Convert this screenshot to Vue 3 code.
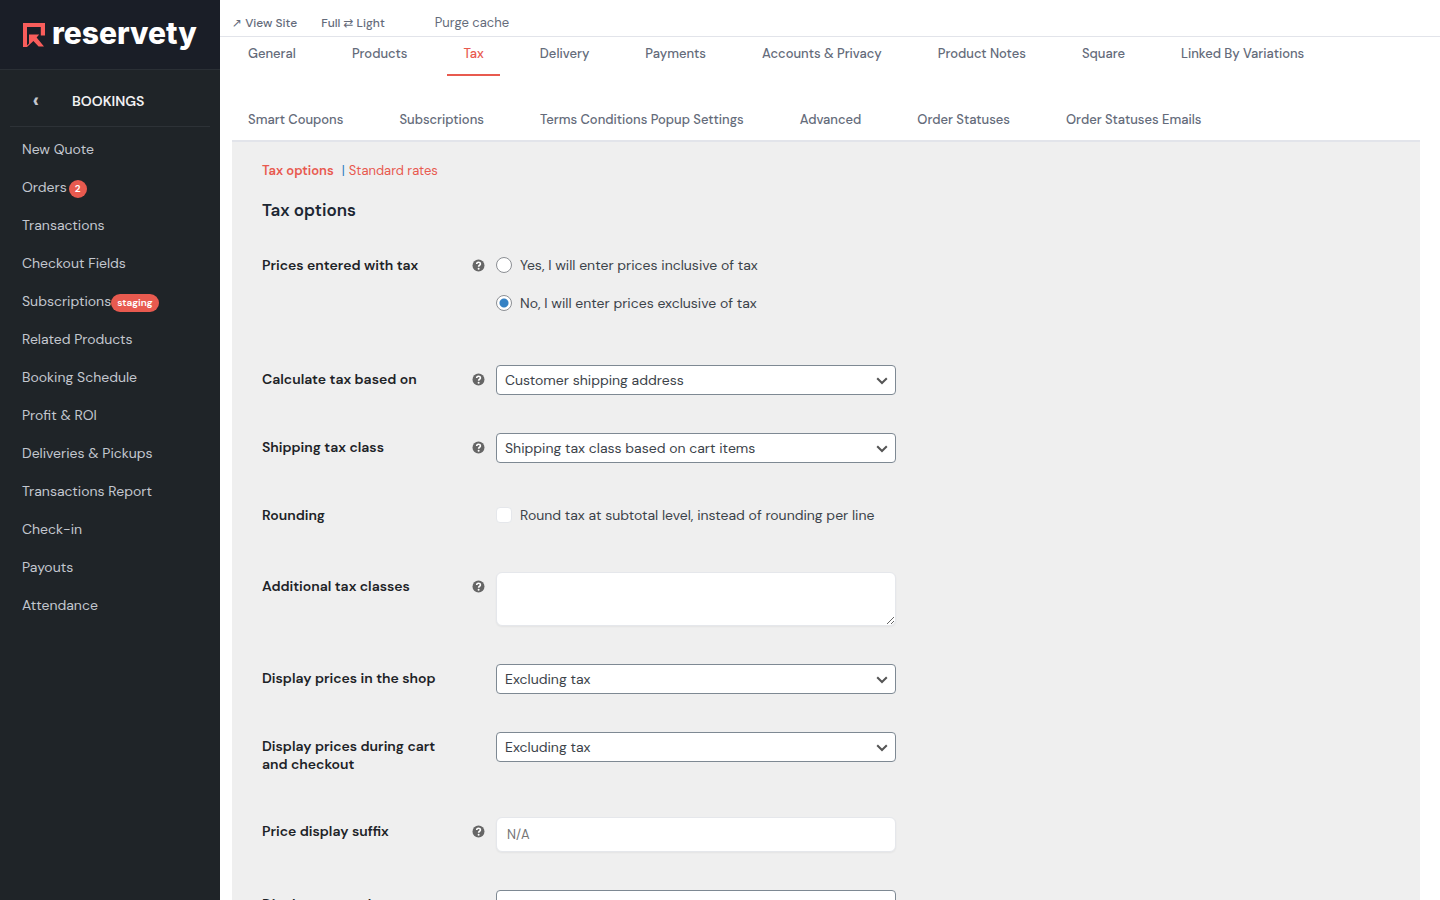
<template>
  <div class="admin">
    <aside class="sidebar">
      <a href="#" class="brand">
        <svg class="brand-mark" viewBox="0 0 22 24" aria-hidden="true">
          <path d="M0 0H22V12.5H17.8V4H4V24H0Z" />
          <path d="M6 11.5H16.2L13.6 14.6L21 23.6H15.6L10.4 18L4 24V22.5L6 20.5Z" />
        </svg>
        <span class="brand-name">reservety</span>
      </a>

      <div class="section-head">
        <button type="button" class="back" aria-label="Back">‹</button>
        <strong>BOOKINGS</strong>
      </div>

      <ul class="menu">
        <li v-for="item in menu" :key="item.label">
          <a href="#">
            <span>{{ item.label }}</span>
            <span v-if="item.badge" class="badge" :class="{ round: item.count }">{{ item.badge }}</span>
          </a>
        </li>
      </ul>
    </aside>

    <main class="content">
      <div class="topbar">
        <a href="#" class="small"><span class="arrow">↗</span> View Site</a>
        <a href="#" class="small">Full ⇄ Light</a>
        <a href="#" class="purge">Purge cache</a>
      </div>

      <nav class="tabs">
        <a v-for="tab in tabs" :key="tab" href="#" :class="{ active: tab === activeTab }">{{ tab }}</a>
      </nav>

      <section class="panel">
        <div class="subnav">
          <a href="#" class="current">Tax options</a>
          <span class="divider">|</span>
          <a href="#">Standard rates</a>
        </div>

        <h2>Tax options</h2>

        <form @submit.prevent>
          <div v-for="row in rows" :key="row.id" class="row">
            <div class="row-head">
              <component :is="labelTag(row)" :id="row.id + '-label'" class="row-label" :for="labelTag(row) === 'label' ? row.id : null">
                {{ row.label }}
              </component>
              <svg v-if="row.help" class="help" viewBox="0 0 13 13" aria-hidden="true">
                <circle cx="6.5" cy="6.5" r="6" fill="#666" />
                <path d="M4.7 5.1C4.7 2.7 8.4 2.8 8.4 4.9C8.4 6.3 6.6 6.2 6.6 7.7" fill="none" stroke="#fff" stroke-width="1.6" />
                <circle cx="6.6" cy="9.7" r="1" fill="#fff" />
              </svg>
            </div>

            <div class="field">
              <ul v-if="row.type === 'radio'" class="radios" role="radiogroup" :aria-labelledby="row.id + '-label'">
                <li v-for="opt in row.options" :key="opt.value">
                  <label class="choice">
                    <input v-model="row.value" type="radio" :name="row.id" :value="opt.value" />
                    <span>{{ opt.text }}</span>
                  </label>
                </li>
              </ul>

              <div v-else-if="row.type === 'checkbox'" class="check-wrap">
                <label class="choice">
                  <input v-model="row.value" type="checkbox" />
                  <span>{{ row.text }}</span>
                </label>
              </div>

              <textarea v-else-if="row.type === 'textarea'" :id="row.id" v-model="row.value"></textarea>

              <input v-else-if="row.type === 'text'" :id="row.id" v-model="row.value" type="text" :placeholder="row.placeholder" />

              <div v-else class="select-wrap">
                <select :id="row.id" v-model="row.value">
                  <option v-for="opt in row.options" :key="opt">{{ opt }}</option>
                </select>
                <svg class="chevron" viewBox="0 0 12 8" aria-hidden="true">
                  <path d="M1.2 1.2L6 6L10.8 1.2" fill="none" stroke="#555" stroke-width="2" />
                </svg>
              </div>
            </div>
          </div>
        </form>
      </section>
    </main>
  </div>
</template>

<script setup>
import { ref } from 'vue'

const menu = [
  { label: 'New Quote' },
  { label: 'Orders', badge: '2', count: true },
  { label: 'Transactions' },
  { label: 'Checkout Fields' },
  { label: 'Subscriptions', badge: 'staging' },
  { label: 'Related Products' },
  { label: 'Booking Schedule' },
  { label: 'Profit & ROI' },
  { label: 'Deliveries & Pickups' },
  { label: 'Transactions Report' },
  { label: 'Check-in' },
  { label: 'Payouts' },
  { label: 'Attendance' },
]

const tabs = [
  'General',
  'Products',
  'Tax',
  'Delivery',
  'Payments',
  'Accounts & Privacy',
  'Product Notes',
  'Square',
  'Linked By Variations',
  'Smart Coupons',
  'Subscriptions',
  'Terms Conditions Popup Settings',
  'Advanced',
  'Order Statuses',
  'Order Statuses Emails',
]
const activeTab = 'Tax'

const rows = ref([
  {
    id: 'prices-include-tax',
    label: 'Prices entered with tax',
    type: 'radio',
    help: true,
    value: 'no',
    options: [
      { value: 'yes', text: 'Yes, I will enter prices inclusive of tax' },
      { value: 'no', text: 'No, I will enter prices exclusive of tax' },
    ],
  },
  {
    id: 'tax-based-on',
    label: 'Calculate tax based on',
    type: 'select',
    help: true,
    value: 'Customer shipping address',
    options: ['Customer shipping address'],
  },
  {
    id: 'shipping-tax-class',
    label: 'Shipping tax class',
    type: 'select',
    help: true,
    value: 'Shipping tax class based on cart items',
    options: ['Shipping tax class based on cart items'],
  },
  {
    id: 'rounding',
    label: 'Rounding',
    type: 'checkbox',
    value: false,
    text: 'Round tax at subtotal level, instead of rounding per line',
  },
  { id: 'tax-classes', label: 'Additional tax classes', type: 'textarea', help: true, value: '' },
  {
    id: 'display-shop',
    label: 'Display prices in the shop',
    type: 'select',
    value: 'Excluding tax',
    options: ['Excluding tax'],
  },
  {
    id: 'display-cart',
    label: 'Display prices during cart and checkout',
    type: 'select',
    value: 'Excluding tax',
    options: ['Excluding tax'],
  },
  { id: 'suffix', label: 'Price display suffix', type: 'text', help: true, value: '', placeholder: 'N/A' },
  {
    id: 'tax-totals',
    label: 'Display tax totals',
    type: 'select',
    value: 'Itemized',
    options: ['Itemized'],
  },
])

// radio and checkbox rows have their labels next to the inputs
function labelTag(row) {
  return row.type === 'radio' || row.type === 'checkbox' ? 'span' : 'label'
}
</script>

<style>
body {
  margin: 0;
  background: #fff;
}
</style>

<style scoped>
.admin {
  display: flex;
  height: 100vh;
  overflow: hidden;
  font-family: "DM Sans", "DejaVu Sans", sans-serif;
  font-size: 13px;
  line-height: 18px;
  color: #3c434a;
}

a {
  color: inherit;
  text-decoration: none;
}

ul {
  list-style: none;
  margin: 0;
  padding: 0;
}

/* sidebar */
.sidebar {
  flex: 0 0 220px;
  background: #1f2428;
  color: #c3c7cf;
  font-size: 14px;
}

.brand {
  display: flex;
  align-items: center;
  gap: 7px;
  height: 69px;
  padding-left: 23px;
  background: #1a1e27;
  border-bottom: 1px solid #2a2f35;
}

.brand-mark {
  width: 22px;
  height: 24px;
  fill: #f95d5b;
}

.brand-name {
  padding-bottom: 4px;
  color: #fff;
  font-family: Inter, sans-serif;
  font-size: 30px;
  font-weight: 800;
  line-height: 36px;
}

.section-head {
  display: flex;
  align-items: center;
  height: 50px;
  margin: 0 10px;
  padding-top: 6px;
  border-bottom: 1px solid #2d3237;
}

.section-head strong {
  color: #f0f0f1;
  font-weight: 600;
}

.back {
  width: 52px;
  margin-right: 10px;
  padding: 0;
  border: 0;
  background: none;
  color: #c3c7cf;
  font-family: inherit;
  font-size: 22px;
  font-weight: 700;
  line-height: 18px;
}

.menu {
  padding-top: 3px;
}

.menu a {
  display: flex;
  align-items: center;
  height: 38px;
  padding-left: 22px;
}

.badge {
  margin-top: 3px;
  padding: 0 6px;
  border-radius: 9px;
  background: #e85a4f;
  color: #fff;
  font-size: 10px;
  font-weight: 600;
}

.badge.round {
  width: 18px;
  margin-left: 2px;
  padding: 0;
  text-align: center;
}

/* top */
.content {
  flex: 1;
  min-width: 0;
}

.topbar {
  display: flex;
  align-items: center;
  gap: 24px;
  height: 26px;
  padding: 10px 12px 0;
  border-bottom: 1px solid #e2e4ea;
  color: #646b7a;
}

.small {
  font-size: 12px;
  font-weight: 500;
}

.arrow {
  font-family: "DejaVu Sans", sans-serif;
}

.purge {
  margin-left: 26px;
}

.tabs {
  display: flex;
  flex-wrap: wrap;
  gap: 29px 24px;
  margin: 0 20px 0 12px;
  border-bottom: 2px solid #e2e4ea;
  color: #646b7a;
  font-weight: 500;
}

.tabs a {
  margin-bottom: -2px;
  padding: 8px 16px 11px;
  border-bottom: 2px solid transparent;
}

.tabs a.active {
  border-color: #e85a4f;
  color: #e85a4f;
}

/* settings */
.panel {
  margin: 0 20px 0 12px;
  padding: 20px 30px;
  background: #efefef;
}

.subnav {
  display: flex;
  gap: 4px;
  color: #e85a4f;
}

.subnav .current {
  margin-right: 4px;
  font-weight: 600;
}

.divider {
  color: #2f7fc1;
}

h2 {
  margin: 18px 0 10px;
  color: #1d2733;
  font-size: 17px;
  font-weight: 600;
  line-height: 24px;
}

.row {
  display: flex;
  align-items: flex-start;
  padding: 19px 0;
}

.row-head {
  display: flex;
  justify-content: space-between;
  width: 223px;
  margin-right: 11px;
  padding: 5px 0 6px;
}

.row-label {
  max-width: 190px;
  color: #1d2327;
  font-size: 14px;
  font-weight: 600;
}

.help {
  flex: none;
  width: 13px;
  height: 13px;
  margin-top: 3px;
}

.field {
  flex: 0 1 400px;
  font-size: 14px;
}

.choice {
  display: flex;
  align-items: center;
  gap: 8px;
  height: 28px;
}

.radios li {
  margin-bottom: 10px;
}

.check-wrap {
  height: 33px;
}

.choice input {
  appearance: none;
  box-sizing: border-box;
  width: 16px;
  height: 16px;
  margin: 0;
  border: 1px solid #8c8f94;
  border-radius: 50%;
  background: #fff;
}

.choice input[type="checkbox"] {
  border-color: #e5e7eb;
  border-radius: 4px;
}

.choice input[type="radio"]:checked {
  background: radial-gradient(circle, #3582c4 4px, #fff 5px);
}

.choice input[type="checkbox"]:checked {
  background: #3582c4;
}

.select-wrap {
  position: relative;
}

select,
textarea,
input[type="text"] {
  display: block;
  box-sizing: border-box;
  width: 100%;
  background: #fff;
  color: #3c434a;
  font-family: inherit;
}

select {
  appearance: none;
  height: 30px;
  padding: 0 28px 0 8px;
  border: 1px solid #7e8993;
  border-radius: 4px;
  font-size: 14px;
}

.chevron {
  position: absolute;
  top: 12px;
  right: 8px;
  width: 12px;
  height: 8px;
  pointer-events: none;
}

textarea,
input[type="text"] {
  padding: 0 10px;
  border: 1px solid #e5e7eb;
  border-radius: 6px;
  box-shadow: 0 1px 2px rgba(0, 0, 0, 0.05);
  font-size: 13px;
}

textarea {
  height: 54px;
}

input[type="text"] {
  height: 35px;
}

input::placeholder {
  color: #757575;
}
</style>
